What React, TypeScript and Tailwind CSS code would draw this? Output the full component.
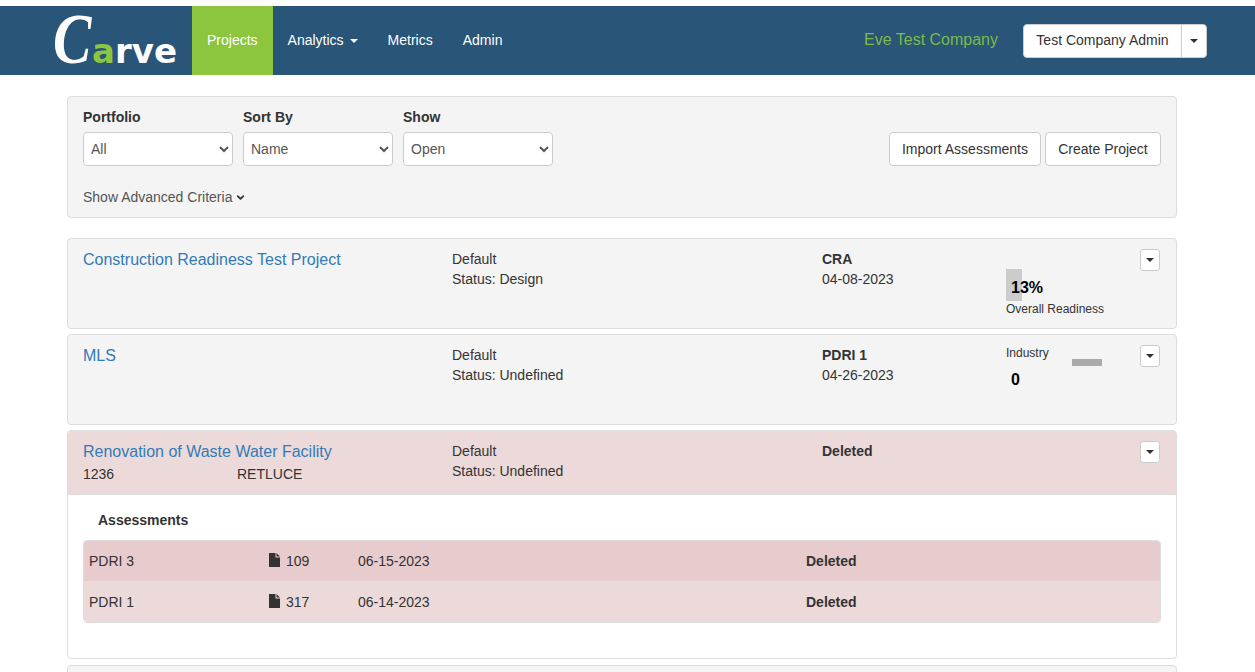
import React from "react";
import { ChevronDown } from "lucide-react";

const Caret = () => (
  <span className="inline-block w-0 h-0 border-x-4 border-t-4 border-x-transparent border-t-[#333]"></span>
);

const DropButton = () => (
  <button className="w-[20px] h-[22px] flex items-center justify-center bg-white border border-[#ccc] rounded-[3px]">
    <Caret />
  </button>
);

const FileIcon = () => (
  <svg width="11" height="14" viewBox="0 0 11 14" className="shrink-0 -mt-[2px]">
    <path d="M0 0H6.5V4.5H11V14H0Z M7.5 0L11 3.5H7.5Z" fill="#333" />
  </svg>
);

const FilterSelect = ({ label, options }: { label: string; options: string[] }) => (
  <div className="w-[150px]">
    <p className="font-bold leading-[20px] h-[25px]">{label}</p>
    <select className="w-full h-[34px] bg-white border border-[#ccc] rounded-[4px] pl-[3px] text-[#555] text-[14px]">
      {options.map((o) => (
        <option key={o}>{o}</option>
      ))}
    </select>
  </div>
);

type ProjectRowProps = {
  title: string;
  status: string;
  code: string;
  date?: string;
  children?: React.ReactNode;
};

const ProjectRow = ({ title, status, code, date, children }: ProjectRowProps) => (
  <div className="flex items-start">
    <div className="w-[369px] pt-[1px] text-[16px] leading-[20px] text-[#337ab7]">{title}</div>
    <div className="w-[370px] leading-[20px]">
      <p>Default</p>
      <p>Status: {status}</p>
    </div>
    <div className="w-[184px] leading-[20px]">
      <p className="font-bold">{code}</p>
      {date && <p>{date}</p>}
    </div>
    <div className="w-[134px]">{children}</div>
    <DropButton />
  </div>
);

export default function App() {
  return (
    <div
      className="h-[672px] overflow-hidden bg-white text-[14px] text-[#333]"
      style={{ fontFamily: '"Liberation Sans", Arial, sans-serif' }}
    >
      <nav className="mt-[6px] h-[69px] bg-[#285578] flex items-stretch">
        <div className="w-[192px] pl-[53px] flex items-end pb-[7px] text-white">
          <span
            className="inline-block origin-left scale-x-[0.8] text-[72px] font-bold italic leading-[58px] -mr-[9px]"
            style={{ fontFamily: '"Liberation Serif", serif' }}
          >
            C
          </span>
          <span
            className="text-[34px] font-bold leading-[34px]"
            style={{ fontFamily: '"DejaVu Sans", sans-serif' }}
          >
            <span className="text-[#8cc63f]">a</span>rve
          </span>
        </div>
        <a className="bg-[#8cc63f] text-white px-[15px] flex items-center">Projects</a>
        <a className="text-white px-[15px] flex items-center gap-[6px]">
          Analytics
          <span className="inline-block w-0 h-0 border-x-4 border-t-4 border-x-transparent border-t-white"></span>
        </a>
        <a className="text-white px-[15px] flex items-center">Metrics</a>
        <a className="text-white px-[15px] flex items-center">Admin</a>
        <div className="ml-auto mr-[48px] flex items-center">
          <span className="text-[16px] text-[#7cbb45] mr-[25px] -mt-[2px]">Eve Test Company</span>
          <div className="flex h-[34px] bg-white border border-[#ccc] rounded-[4px]">
            <span className="w-[157px] flex items-center justify-center">Test Company Admin</span>
            <span className="w-[25px] border-l border-[#ccc] flex items-center justify-center">
              <Caret />
            </span>
          </div>
        </div>
      </nav>

      <main className="ml-[67px] w-[1110px] pt-[21px]">
        <section className="h-[122px] bg-[#f4f4f4] border border-[#ddd] rounded-[4px] px-[15px] pt-[10px] mb-[20px]">
          <div className="flex items-end gap-[10px]">
            <FilterSelect label="Portfolio" options={["All"]} />
            <FilterSelect label="Sort By" options={["Name"]} />
            <FilterSelect label="Show" options={["Open"]} />
            <button className="ml-auto h-[34px] w-[152px] bg-white border border-[#ccc] rounded-[4px]">
              Import Assessments
            </button>
            <button className="-ml-[6px] h-[34px] w-[116px] bg-white border border-[#ccc] rounded-[4px]">
              Create Project
            </button>
          </div>
          <p className="mt-[21px] leading-[20px] text-[#555] flex items-center gap-[3px]">
            Show Advanced Criteria
            <ChevronDown size={11} strokeWidth={4} className="text-[#333]" />
          </p>
        </section>

        <section className="h-[91px] bg-[#f4f4f4] border border-[#ddd] rounded-[4px] px-[15px] pt-[10px] mb-[5px]">
          <ProjectRow title="Construction Readiness Test Project" status="Design" code="CRA" date="04-08-2023">
            <div className="relative h-[32px] mt-[20px]">
              <div className="absolute left-0 top-0 w-[16px] h-[32px] bg-[#ccc]"></div>
              <p className="relative pl-[5px] pt-[9px] text-[16px] leading-[20px] font-bold text-black">13%</p>
            </div>
            <p className="text-[12px] leading-[16px]">Overall Readiness</p>
          </ProjectRow>
        </section>

        <section className="h-[91px] bg-[#f4f4f4] border border-[#ddd] rounded-[4px] px-[15px] pt-[10px] mb-[5px]">
          <ProjectRow title="MLS" status="Undefined" code="PDRI 1" date="04-26-2023">
            <div className="flex items-start">
              <p className="w-[66px] text-[12px] leading-[16px]">Industry</p>
              <div className="w-[30px] h-[7px] mt-[14px] bg-[#aaa]"></div>
            </div>
            <p className="pl-[5px] mt-[4px] text-[16px] leading-[20px] font-bold text-black">0</p>
          </ProjectRow>
        </section>

        <section className="h-[229px] bg-white border border-[#ddd] rounded-[4px] mb-[6px] overflow-hidden">
          <div className="h-[64px] bg-[#ecdada] border-b border-[#ddd] px-[15px] pt-[10px]">
            <ProjectRow title="Renovation of Waste Water Facility" status="Undefined" code="Deleted" />
            <div className="flex -mt-[17px] leading-[20px]">
              <span className="w-[154px]">1236</span>
              <span>RETLUCE</span>
            </div>
          </div>
          <div className="px-[15px]">
            <p className="pl-[15px] pt-[15px] h-[45px] font-bold leading-[20px]">Assessments</p>
            <div className="border border-[#ddd] rounded-[4px] overflow-hidden">
              <div className="h-[40px] bg-[#e8cbcc] flex items-center pl-[5px]">
                <span className="w-[180px]">PDRI 3</span>
                <span className="w-[89px] flex items-center gap-[6px]">
                  <FileIcon />
                  109
                </span>
                <span className="w-[448px]">06-15-2023</span>
                <span className="font-bold">Deleted</span>
              </div>
              <div className="h-[41px] pt-[1px] bg-[#ecdada] flex items-center pl-[5px]">
                <span className="w-[180px]">PDRI 1</span>
                <span className="w-[89px] flex items-center gap-[6px]">
                  <FileIcon />
                  317
                </span>
                <span className="w-[448px]">06-14-2023</span>
                <span className="font-bold">Deleted</span>
              </div>
            </div>
          </div>
        </section>

        <section className="h-[91px] bg-[#f4f4f4] border border-[#ddd] rounded-[4px]"></section>
      </main>
    </div>
  );
}
